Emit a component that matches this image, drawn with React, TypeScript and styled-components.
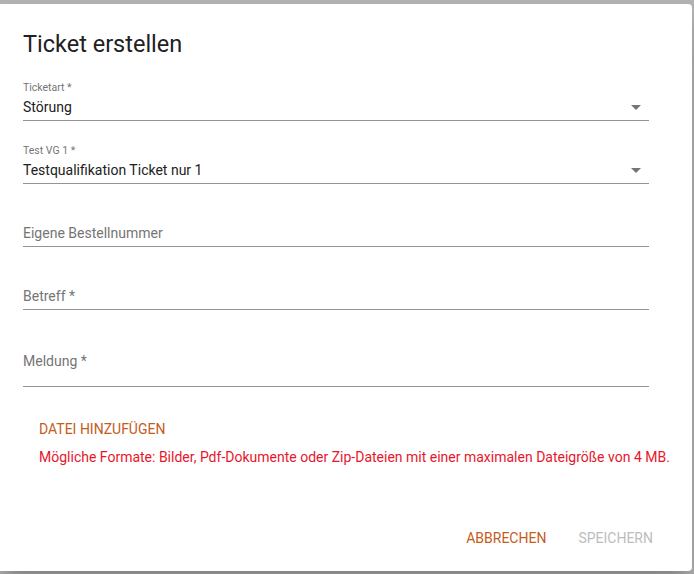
import React from 'react';
import styled, { createGlobalStyle } from 'styled-components';

const GlobalStyle = createGlobalStyle`
  html, body {
    margin: 0;
    padding: 0;
    background: #b4b4b4;
    font-family: Roboto, "Liberation Sans", sans-serif;
  }
  body {
    width: 694px;
    height: 574px;
    overflow: hidden;
  }
`;

type FieldProps = {
  label?: string;
  value?: string;
  placeholder?: string;
  select?: boolean;
  multiline?: boolean;
};

const Field = ({ label, value, placeholder, select, multiline }: FieldProps) => (
  <StyledField>
    <FieldLabel>{label}</FieldLabel>
    <FieldInput $multiline={multiline}>
      {value ? <FieldValue>{value}</FieldValue> : <FieldPlaceholder>{placeholder}</FieldPlaceholder>}
      {select && (
        <Arrow viewBox="0 0 10 5" width="10" height="5">
          <path d="M0 0 L10 0 L5 5 Z" fill="#757575" />
        </Arrow>
      )}
    </FieldInput>
  </StyledField>
);

const App = () => {
  return (
    <>
      <GlobalStyle />
      <Dialog>
        <Title>Ticket erstellen</Title>
        <Form>
          <Field label="Ticketart *" value="Störung" select />
          <Field label="Test VG 1 *" value="Testqualifikation Ticket nur 1" select />
          <Field placeholder="Eigene Bestellnummer" />
          <Field placeholder="Betreff *" />
          <Field placeholder="Meldung *" multiline />
        </Form>
        <Attachment>
          <TextButton $color="#c45c1c">Datei hinzufügen</TextButton>
          <Hint>Mögliche Formate: Bilder, Pdf-Dokumente oder Zip-Dateien mit einer maximalen Dateigröße von 4 MB.</Hint>
        </Attachment>
        <Actions>
          <TextButton $color="#c45c1c">Abbrechen</TextButton>
          <TextButton $color="#bdbdbd">Speichern</TextButton>
        </Actions>
      </Dialog>
    </>
  );
};

const Dialog = styled.div`
  margin-top: 4px;
  width: 692px;
  height: 567px;
  background: #fff;
  border-radius: 0 4px 4px 0;
  box-shadow: 0 11px 15px -7px rgba(0, 0, 0, 0.2), 0 24px 38px 3px rgba(0, 0, 0, 0.14);
  display: flex;
  flex-direction: column;
  box-sizing: border-box;
`;

const Title = styled.h2`
  margin: 0;
  padding: 24px 23px 0;
  font-size: 23.5px;
  line-height: 32px;
  font-weight: 400;
  color: #212121;
`;

const Form = styled.div`
  margin-top: 21px;
  padding: 0 43px 0 23px;
  display: flex;
  flex-direction: column;
  gap: 23px;
`;

const StyledField = styled.div`
  display: flex;
  flex-direction: column;
`;

const FieldLabel = styled.div`
  height: 13px;
  font-size: 10.5px;
  line-height: 13px;
  color: #757575;
`;

const FieldInput = styled.div<{ $multiline?: boolean }>`
  display: flex;
  justify-content: space-between;
  height: ${(p) => (p.$multiline ? '41px' : '27px')};
  padding: 0 4px 0 0;
  align-items: ${(p) => (p.$multiline ? 'flex-start' : 'center')};
  padding-top: ${(p) => (p.$multiline ? '5px' : '0')};
  box-sizing: border-box;
  border-bottom: 1px solid #949494;
  font-size: 14px;
  line-height: 20px;
`;

const FieldValue = styled.span`
  color: #212121;
`;

const FieldPlaceholder = styled.span`
  color: #757575;
`;

const Arrow = styled.svg`
  display: block;
  margin-right: 4px;
`;

const Attachment = styled.div`
  margin-top: 26px;
  padding: 0 23px;
  display: flex;
  flex-direction: column;
  align-items: flex-start;
  gap: 2px;
`;

const TextButton = styled.button<{ $color: string }>`
  border: 0;
  background: none;
  padding: 6px 16px;
  font-family: Roboto, "Liberation Sans", sans-serif;
  font-size: 14px;
  line-height: 20px;
  font-weight: 400;
  text-transform: uppercase;
  color: ${(p) => p.$color};
  cursor: pointer;
`;

const Hint = styled.div`
  padding: 0 16px;
  font-size: 14px;
  line-height: 20px;
  white-space: nowrap;
  color: #e8162b;
`;

const Actions = styled.div`
  margin-top: auto;
  padding: 0 23px 15px;
  display: flex;
  justify-content: flex-end;
  height: 36px;
  align-items: center;
`;

export default App;
